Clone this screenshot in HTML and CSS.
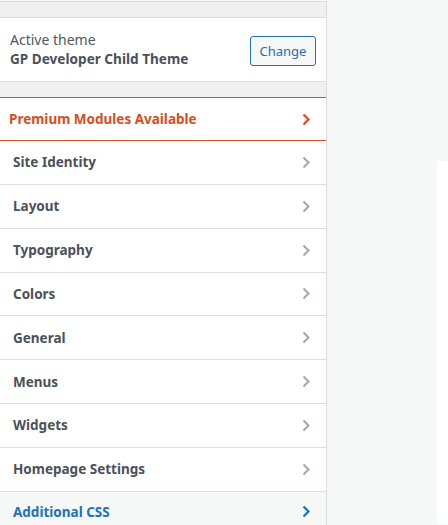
FILE: index.html
```html
<!DOCTYPE html>
<html>
<head>
<meta charset="utf-8">
<link rel="stylesheet" href="styles.css">
</head>
<body>
<div class="app">
  <aside class="sidebar">
    <div class="strip strip-top"></div>
    <div class="theme">
      <div class="theme-info">
        <span class="theme-label">Active theme</span>
        <strong class="theme-name">GP Developer Child Theme</strong>
      </div>
      <button class="btn">Change</button>
    </div>
    <div class="strip"></div>
    <ul class="menu">
      <li class="item premium"><span>Premium Modules Available</span><svg class="chev" viewBox="0 0 8 13"><polyline points="1.5,1.5 6.5,6.5 1.5,11.5"/></svg></li>
      <li class="item"><span>Site Identity</span><svg class="chev" viewBox="0 0 8 13"><polyline points="1.5,1.5 6.5,6.5 1.5,11.5"/></svg></li>
      <li class="item"><span>Layout</span><svg class="chev" viewBox="0 0 8 13"><polyline points="1.5,1.5 6.5,6.5 1.5,11.5"/></svg></li>
      <li class="item"><span>Typography</span><svg class="chev" viewBox="0 0 8 13"><polyline points="1.5,1.5 6.5,6.5 1.5,11.5"/></svg></li>
      <li class="item"><span>Colors</span><svg class="chev" viewBox="0 0 8 13"><polyline points="1.5,1.5 6.5,6.5 1.5,11.5"/></svg></li>
      <li class="item"><span>General</span><svg class="chev" viewBox="0 0 8 13"><polyline points="1.5,1.5 6.5,6.5 1.5,11.5"/></svg></li>
      <li class="item"><span>Menus</span><svg class="chev" viewBox="0 0 8 13"><polyline points="1.5,1.5 6.5,6.5 1.5,11.5"/></svg></li>
      <li class="item"><span>Widgets</span><svg class="chev" viewBox="0 0 8 13"><polyline points="1.5,1.5 6.5,6.5 1.5,11.5"/></svg></li>
      <li class="item"><span>Homepage Settings</span><svg class="chev" viewBox="0 0 8 13"><polyline points="1.5,1.5 6.5,6.5 1.5,11.5"/></svg></li>
      <li class="item active"><span>Additional CSS</span><svg class="chev" viewBox="0 0 8 13"><polyline points="1.5,1.5 6.5,6.5 1.5,11.5"/></svg></li>
    </ul>
  </aside>
  <main class="preview">
    <div class="frame"></div>
  </main>
</div>
</body>
</html>
```

FILE: styles.css
```css
* { box-sizing: border-box; }
html, body { margin: 0; padding: 0; height: 100%; }
body {
  background: #f6f7f7;
  font-family: "Noto Sans", "Open Sans", sans-serif;
  overflow: hidden;
}
.app {
  display: flex;
  height: 525px;
}
.sidebar {
  width: 327px;
  flex: none;
  margin-top: 1px;
  background: #f0f0f1;
  border-right: 1px solid #dcdcde;
  display: flex;
  flex-direction: column;
  overflow: hidden;
}
.sidebar > * { flex: none; }
.strip {
  height: 15px;
  background: #f0f0f1;
}
.strip-top {
  border-top: 1px solid #dcdcde;
  height: 17px;
  border-bottom: 1px solid #dcdcde;
}
.theme {
  height: 64px;
  background: #fff;
  border-bottom: 1px solid #dcdcde;
  display: flex;
  align-items: center;
  justify-content: space-between;
  padding: 0 10px;
}
.theme-info {
  display: flex;
  flex-direction: column;
  gap: 1px;
  color: #50575e;
}
.theme-label {
  font-size: 14px;
  line-height: 18px;
}
.theme-name {
  font-size: 13.6px;
  font-weight: 700;
  line-height: 18px;
  color: #4a5158;
}
.btn {
  font-family: inherit;
  font-size: 13px;
  color: #2271b1;
  background: #f6f7f7;
  border: 1px solid #2271b1;
  border-radius: 3px;
  height: 30px;
  width: 66px;
  padding: 0;
  margin-top: 2px;
}
.menu {
  list-style: none;
  margin: 0;
  padding: 0;
}
.item {
  height: 43.85px;
  background: #fff;
  border-bottom: 1px solid #dcdcde;
  display: flex;
  align-items: center;
  justify-content: space-between;
  padding: 0 16px 0 13px;
  font-size: 13.5px;
  font-weight: 700;
  color: #4a5158;
}
.item.premium {
  height: 44px;
  border-top: 1px solid #d54e21;
  border-bottom: 1px solid #d54e21;
  color: #d54e21;
  padding-left: 9px;
}
.item.active {
  background: #f6f7f7;
  color: #2271b1;
  border-bottom: none;
  height: 40px;
}
.chev {
  width: 8px;
  height: 13px;
  fill: none;
  stroke: #a7aaad;
  stroke-width: 2.2;
}
.premium .chev { stroke: #d54e21; }
.active .chev { stroke: #2271b1; }
.preview {
  flex: 1;
  display: flex;
  flex-direction: column;
  padding: 161px 0 1px 110px;
}
.frame {
  flex: 1;
  background: #fff;
}
```
